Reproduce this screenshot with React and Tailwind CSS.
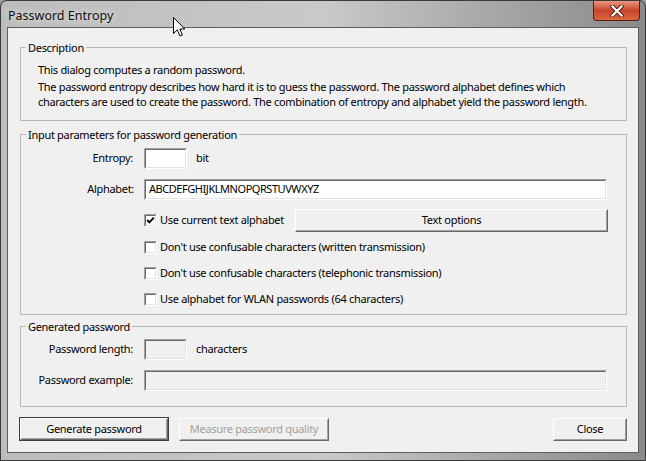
import React from 'react';

function Sunken({ className = '', disabled = false, children }) {
  return (
    <div className={`border border-t-[#a0a0a0] border-l-[#a0a0a0] border-r-white border-b-white ${className}`}>
      <div
        className={`flex h-full items-center border border-t-[#696969] border-l-[#696969] border-r-[#e3e3e3] border-b-[#e3e3e3] pl-[3px] ${
          disabled ? 'bg-[#f0f0f0]' : 'bg-white'
        }`}
      >
        {children}
      </div>
    </div>
  );
}

function Button({ className = '', primary = false, disabled = false, children }) {
  const face = (
    <div className="flex h-full border border-t-white border-l-white border-r-[#696969] border-b-[#696969]">
      <div
        className={`flex flex-1 items-center justify-center border border-t-[#f0f0f0] border-l-[#f0f0f0] border-r-[#a0a0a0] border-b-[#a0a0a0] bg-[#f0f0f0] ${
          disabled ? 'text-[#a0a0a0]' : 'text-black'
        }`}
      >
        {children}
      </div>
    </div>
  );
  if (primary) {
    return <div className={`border border-[#3c3c3c] ${className}`}>{face}</div>;
  }
  return <div className={className}>{face}</div>;
}

function Check({ checked = false, children }) {
  return (
    <div className="flex h-[20px] items-center">
      <div className="h-[13px] w-[13px] border border-t-[#a0a0a0] border-l-[#a0a0a0] border-r-white border-b-white">
        <div className="flex h-full items-center justify-center border border-t-[#696969] border-l-[#696969] border-r-[#e3e3e3] border-b-[#e3e3e3] bg-white">
          {checked && (
            <svg width="9" height="9" viewBox="0 0 9 9">
              <polyline points="1.2,4 3.4,6.4 7.8,1.6" fill="none" stroke="#000" strokeWidth="1.9" />
            </svg>
          )}
        </div>
      </div>
      <span className="ml-[3px]">{children}</span>
    </div>
  );
}

function Group({ title, className = '', children }) {
  return (
    <fieldset className={`border border-[#b9b9b9] ${className}`}>
      <legend className="ml-[5px] px-[2px] leading-[15px]">{title}</legend>
      {children}
    </fieldset>
  );
}

export default function App() {
  return (
    <div className="relative h-[461px] w-[646px] overflow-hidden bg-[#9a9a9a] font-['Noto_Sans',sans-serif] text-[11px] tracking-[-0.3px] text-black">
      <div className="flex h-full flex-col rounded-t-[7px] border border-[#3a3a3a] bg-linear-to-r from-[#bcbcbc] via-[#c9c9c9] to-[#8a8a8a]">
        {/* title bar */}
        <div className="flex h-[28px] items-start justify-between">
          <span className="mt-[6px] ml-[7px] text-[12.5px] tracking-normal text-[#111] [text-shadow:0_0_7px_#fff]">
            Password Entropy
          </span>
          <div className="mr-[5px] flex h-[20px] w-[47px] items-center justify-center rounded-b-[4px] border border-t-0 border-[#5b1d12] bg-linear-to-b from-[#e9957f] via-[#c8432a] to-[#d9683f]">
            <svg width="14" height="12" viewBox="0 0 14 12">
              <path d="M2.5 1.5 L11.5 10.5 M11.5 1.5 L2.5 10.5" stroke="#4a1b10" strokeWidth="4" strokeLinecap="square" />
              <path d="M2.5 1.5 L11.5 10.5 M11.5 1.5 L2.5 10.5" stroke="#fff" strokeWidth="2.2" strokeLinecap="square" />
            </svg>
          </div>
        </div>

        {/* client area */}
        <div className="mx-[6px] mb-[7px] flex flex-1 flex-col border border-[#5e5e5e] bg-[#f0f0f0] pt-[12px] pr-[11px] pb-[11px] pl-[12px]">
          <Group title="Description" className="pt-[7px] pb-[11px]">
            <div className="pl-[17px]">
              <p className="leading-[15px]">This dialog computes a random password.</p>
              <p className="mt-[2px] leading-[15px] whitespace-nowrap">
                The password entropy describes how hard it is to guess the password. The password alphabet defines which
                <br />
                characters are used to create the password. The combination of entropy and alphabet yield the password length.
              </p>
            </div>
          </Group>

          <Group title="Input parameters for password generation" className="mt-[6px] pt-[6px] pb-[5px]">
            <div className="flex h-[21px] items-center">
              <span className="w-[112px] text-right">Entropy:</span>
              <Sunken className="ml-[11px] h-[21px] w-[43px]" />
              <span className="ml-[9px]">bit</span>
            </div>
            <div className="mt-[10px] flex h-[21px] items-center">
              <span className="w-[113px] text-right">Alphabet:</span>
              <Sunken className="ml-[10px] h-[21px] w-[463px]">
                <span className="tracking-[-0.45px]">ABCDEFGHIJKLMNOPQRSTUVWXYZ</span>
              </Sunken>
            </div>
            <div className="mt-[9px] ml-[123px] flex h-[23px] w-[464px] items-center justify-between">
              <Check checked>Use current text alphabet</Check>
              <Button className="h-[23px] w-[313px]">Text options</Button>
            </div>
            <div className="mt-[5px] ml-[123px] flex flex-col gap-[6px]">
              <Check>Don't use confusable characters (written transmission)</Check>
              <Check>Don't use confusable characters (telephonic transmission)</Check>
              <Check>Use alphabet for WLAN passwords (64 characters)</Check>
            </div>
          </Group>

          <Group title="Generated password" className="mt-[4px] pt-[5px] pb-[15px]">
            <div className="flex h-[21px] items-center">
              <span className="w-[112px] text-right">Password length:</span>
              <Sunken disabled className="ml-[11px] h-[21px] w-[43px]" />
              <span className="ml-[9px]">characters</span>
            </div>
            <div className="mt-[10px] flex h-[21px] items-center">
              <span className="w-[112px] text-right">Password example:</span>
              <Sunken disabled className="ml-[11px] h-[21px] w-[463px]" />
            </div>
          </Group>

          <div className="mt-[10px] flex items-center">
            <Button primary className="ml-[-1px] h-[24px] w-[150px]">Generate password</Button>
            <Button disabled className="ml-[10px] h-[23px] w-[150px]">Measure password quality</Button>
            <Button className="ml-auto h-[23px] w-[74px]">Close</Button>
          </div>
        </div>
      </div>

      {/* mouse pointer */}
      <svg className="absolute top-[17px] left-[173px]" width="13" height="21" viewBox="0 0 13 21">
        <path
          d="M0.5 0.5 L0.5 16.5 L4.3 12.8 L7 19 L9.4 18 L6.8 12 L11.8 12 Z"
          fill="#fff"
          stroke="#000"
          strokeWidth="1"
          strokeLinejoin="miter"
        />
      </svg>
    </div>
  );
}
